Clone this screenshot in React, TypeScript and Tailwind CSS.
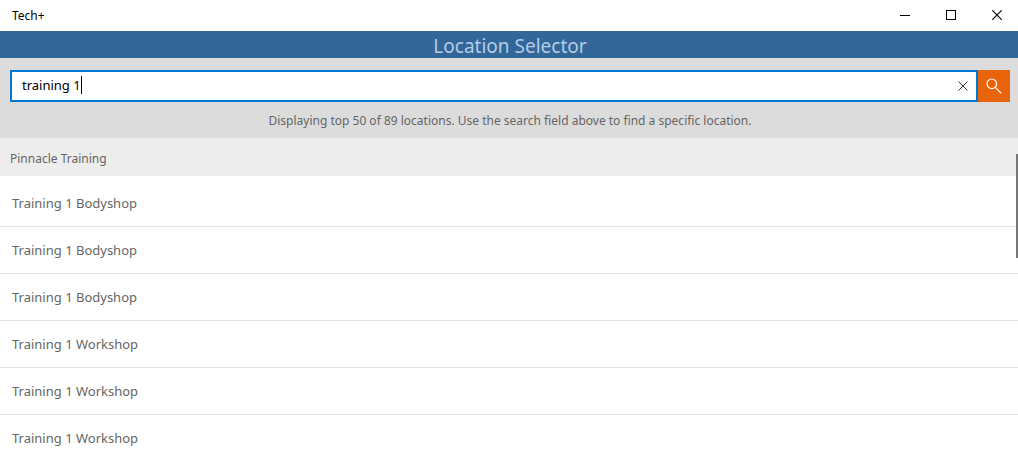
import React, { useRef, useState } from "react";

interface Location {
  id: number;
  name: string;
}

const locations: Location[] = [
  { id: 1, name: "Training 1 Bodyshop" },
  { id: 2, name: "Training 1 Bodyshop" },
  { id: 3, name: "Training 1 Bodyshop" },
  { id: 4, name: "Training 1 Workshop" },
  { id: 5, name: "Training 1 Workshop" },
  { id: 6, name: "Training 1 Workshop" },
];

const TitleBar: React.FC = () => {
  const buttonClass =
    "flex h-full w-[42px] items-center justify-center hover:bg-gray-200";

  return (
    <div className="flex h-[31px] shrink-0 items-center justify-between bg-white">
      <span className="pl-3 text-[12px] leading-4 text-black">Tech+</span>
      <div className="flex h-full gap-1">
        <button type="button" aria-label="Minimize" className={buttonClass}>
          <svg width="10" height="11" viewBox="0 0 10 11" shapeRendering="crispEdges">
            <path d="M0 5.5h10" stroke="#000" />
          </svg>
        </button>
        <button type="button" aria-label="Maximize" className={buttonClass}>
          <svg width="10" height="11" viewBox="0 0 10 11" fill="none" shapeRendering="crispEdges">
            <path d="M0.5 0.5h9v9h-9z" stroke="#000" />
          </svg>
        </button>
        <button type="button" aria-label="Close" className={buttonClass}>
          <svg width="10" height="11" viewBox="0 0 10 11" fill="none">
            <path d="M0.2 0.2l9.6 9.6M9.8 0.2l-9.6 9.6" stroke="#000" strokeWidth="1.1" />
          </svg>
        </button>
      </div>
    </div>
  );
};

const SearchBar: React.FC = () => {
  const [query, setQuery] = useState("training 1");
  const inputRef = useRef<HTMLInputElement>(null);

  const clear = () => {
    setQuery("");
    inputRef.current?.focus();
  };

  return (
    <form className="flex h-8" onSubmit={(e) => e.preventDefault()}>
      <div className="flex flex-1 items-center border-2 border-[#0078d7] bg-white">
        <label
          htmlFor="location-search"
          className="flex flex-1 cursor-text items-center pb-[2px] pl-[10px]"
        >
          {/* the field grows with its text so the caret follows the last letter */}
          <input
            ref={inputRef}
            id="location-search"
            type="text"
            aria-label="Search locations"
            value={query}
            onChange={(e) => setQuery(e.target.value)}
            className="h-6 field-sizing-content bg-transparent text-[13px] leading-6 text-black caret-transparent outline-none"
          />
          <span className="h-[18px] w-px bg-black" />
        </label>
        <button
          type="button"
          aria-label="Clear search"
          onClick={clear}
          className="flex h-full w-[26px] items-center justify-center"
        >
          <svg width="10" height="10" viewBox="0 0 10 10" fill="none">
            <path d="M0.5 0.5l9 9M9.5 0.5l-9 9" stroke="#333" />
          </svg>
        </button>
      </div>
      <button
        type="submit"
        aria-label="Search"
        className="flex w-8 items-center justify-center bg-[#e8640a]"
      >
        <svg width="16" height="16" viewBox="0 0 16 16" fill="none" stroke="#fff" strokeWidth="1.2">
          <circle cx="5.8" cy="5.8" r="4.8" />
          <path d="M9.3 9.3l6 6" />
        </svg>
      </button>
    </form>
  );
};

const App: React.FC = () => {
  return (
    <div className="relative flex h-screen flex-col overflow-hidden bg-white font-['Noto_Sans','Open_Sans',sans-serif]">
      <TitleBar />
      <h1 className="h-[27px] shrink-0 bg-[#336699] pl-[2px] text-center text-[19px] leading-[30px] text-[#b3cde6]">
        Location Selector
      </h1>

      <div className="shrink-0 bg-[#dcdcdc] px-2 pt-3 pb-2">
        <div className="pl-[2px]">
          <SearchBar />
        </div>
        <p className="pt-[10px] pl-[2px] text-center text-[12px] leading-[18px] text-[#666]">
          Displaying top 50 of 89 locations. Use the search field above to find a
          specific location.
        </p>
      </div>

      <h2 className="mb-1 shrink-0 bg-[#ededed] px-[10px] pt-1 text-[12px] leading-[34px] text-[#666]">
        Pinnacle Training
      </h2>
      <ul className="flex-1 overflow-hidden">
        {locations.map((location) => (
          <li key={location.id} className="border-b border-[#e3e3e3]">
            <button
              type="button"
              className="block w-full px-3 text-left text-[13px] leading-[46px] text-[#666] hover:bg-gray-50"
            >
              {location.name}
            </button>
          </li>
        ))}
      </ul>

      {/* collapsed scroll indicator */}
      <div className="absolute top-[154px] right-0 h-[104px] w-[2px] bg-[#767676]" />
    </div>
  );
};

export default App;
